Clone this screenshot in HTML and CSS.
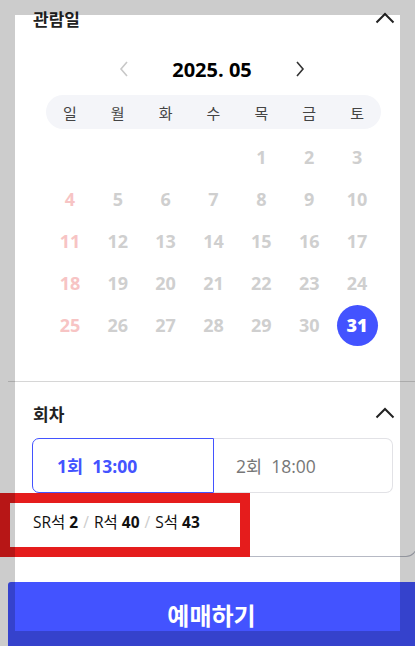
FILE: index.html
```html
<!DOCTYPE html>
<html lang="ko">
<head>
    <meta charset="UTF-8">
    <meta name="viewport" content="width=device-width, initial-scale=1.0">
    <title>예매</title>
    <link rel="stylesheet" href="styles.css">
</head>
<body>
    <div class="page">
        <section class="date">
            <div class="sec-head">
                <h2>관람일</h2>
                <svg class="fold" width="20" height="12" viewBox="0 0 20 12"><polyline points="1.5,10.5 10,2 18.5,10.5" fill="none" stroke="#222" stroke-width="2"/></svg>
            </div>

            <div class="month-nav">
                <svg width="10" height="16" viewBox="0 0 10 16"><polyline points="8,1 2,8 8,15" fill="none" stroke="#c8c8c8" stroke-width="1.6"/></svg>
                <span class="month">2025. 05</span>
                <svg width="10" height="16" viewBox="0 0 10 16"><polyline points="2,1 8,8 2,15" fill="none" stroke="#333" stroke-width="1.6"/></svg>
            </div>

            <div class="week">
                <span>일</span><span>월</span><span>화</span><span>수</span><span>목</span><span>금</span><span>토</span>
            </div>

            <div class="days">
                <span></span><span></span><span></span><span></span>
                <span>1</span><span>2</span><span>3</span>
                <span class="sun">4</span><span>5</span><span>6</span><span>7</span><span>8</span><span>9</span><span>10</span>
                <span class="sun">11</span><span>12</span><span>13</span><span>14</span><span>15</span><span>16</span><span>17</span>
                <span class="sun">18</span><span>19</span><span>20</span><span>21</span><span>22</span><span>23</span><span>24</span>
                <span class="sun">25</span><span>26</span><span>27</span><span>28</span><span>29</span><span>30</span><span class="picked"><b>31</b></span>
            </div>
        </section>

        <div class="divider"></div>

        <section class="round">
            <div class="sec-head">
                <h2>회차</h2>
                <svg class="fold" width="20" height="12" viewBox="0 0 20 12"><polyline points="1.5,10.5 10,2 18.5,10.5" fill="none" stroke="#222" stroke-width="2"/></svg>
            </div>

            <div class="sessions">
                <button class="session active">1회&nbsp; 13:00</button>
                <button class="session">2회&nbsp; 18:00</button>
            </div>

            <div class="seats">
                SR석 <b>2</b> <i>/</i> R석 <b>40</b> <i>/</i> S석 <b>43</b>
            </div>
        </section>

        <button class="book">예매하기</button>

        <div class="mark"></div>
        <div class="spot"></div>
    </div>
</body>
</html>
```

FILE: styles.css
```css
* {
    margin: 0;
    padding: 0;
    box-sizing: border-box;
}

body {
    background: #fff;
    font-family: 'Open Sans', 'Noto Sans CJK KR', sans-serif;
    color: #111;
    overflow: hidden;
}

.page {
    position: relative;
    width: 415px;
    height: 646px;
    overflow: hidden;
}

.sec-head {
    display: flex;
    align-items: center;
    justify-content: space-between;
    height: 36px;
    padding: 0 20px 0 33px;
}

.sec-head h2 {
    font-size: 17px;
    font-weight: 700;
    color: #222;
}

.month-nav {
    display: flex;
    align-items: center;
    justify-content: center;
    gap: 43px;
    margin-top: 16px;
    height: 34px;
    padding-left: 9px;
}

.month {
    font-size: 20px;
    font-weight: 700;
    color: #000;
}

.week {
    display: grid;
    grid-template-columns: repeat(7, 1fr);
    margin: 9px 34px 0 46px;
    height: 34px;
    border-radius: 17px;
    background: #f4f5f9;
    align-items: center;
    text-align: center;
    font-size: 15px;
    color: #444;
}

.days {
    display: grid;
    grid-template-columns: repeat(7, 1fr);
    grid-auto-rows: 42px;
    margin: 7px 34px 0 46px;
    align-items: center;
    justify-items: center;
    font-size: 18px;
    font-weight: 700;
    color: #cfcfcf;
}

.days .sun {
    color: #f7c4c4;
}

.days .picked b {
    display: flex;
    align-items: center;
    justify-content: center;
    width: 41px;
    height: 41px;
    border-radius: 50%;
    background: #4353ff;
    color: #fff;
}

.divider {
    margin: 35px 0 0 8px;
    height: 1px;
    background: #d6d6d6;
}

.round .sec-head {
    margin-top: 13px;
}

.sessions {
    display: flex;
    margin: 7px 22px 0 32px;
    height: 55px;
}

.session {
    flex: 1;
    background: #fff;
    border: 1px solid #e2e2e6;
    font-family: inherit;
    font-size: 17.5px;
    color: #777;
    text-align: left;
    padding-left: 22px;
}

.session:last-child {
    border-left: none;
    border-radius: 0 7px 7px 0;
}

.session.active {
    border-color: #4353ff;
    border-radius: 7px 0 0 7px;
    color: #4353ff;
    font-weight: 700;
    padding-left: 24px;
}

.seats {
    margin-left: 8px;
    margin-right: -2px;
    height: 64px;
    padding: 17px 0 0 25px;
    border-bottom: 1px solid #b6b9c4;
    border-right: 1px solid #b6b9c4;
    border-bottom-right-radius: 11px;
    font-size: 15.5px;
    color: #111;
}

.seats b {
    font-weight: 700;
}

.seats i {
    font-style: normal;
    color: #ccc;
    padding: 0 1px;
}

.book {
    display: block;
    margin: 25px 0 0 8px;
    width: 407px;
    height: 66px;
    border: none;
    border-radius: 3px 0 0 0;
    background: #4353ff;
    color: #fff;
    font-family: inherit;
    font-size: 24px;
    font-weight: 700;
    padding-bottom: 2px;
}

/* annotation frame */
.mark {
    position: absolute;
    left: 0;
    top: 493px;
    width: 250px;
    height: 64px;
    border: 10px solid #e51c1c;
    pointer-events: none;
}

/* dim everything outside the highlighted panel */
.spot {
    position: absolute;
    left: 15px;
    top: 15px;
    width: 385px;
    height: 616px;
    box-shadow: 0 0 0 1000px rgba(0, 0, 0, 0.2);
    pointer-events: none;
}
```
